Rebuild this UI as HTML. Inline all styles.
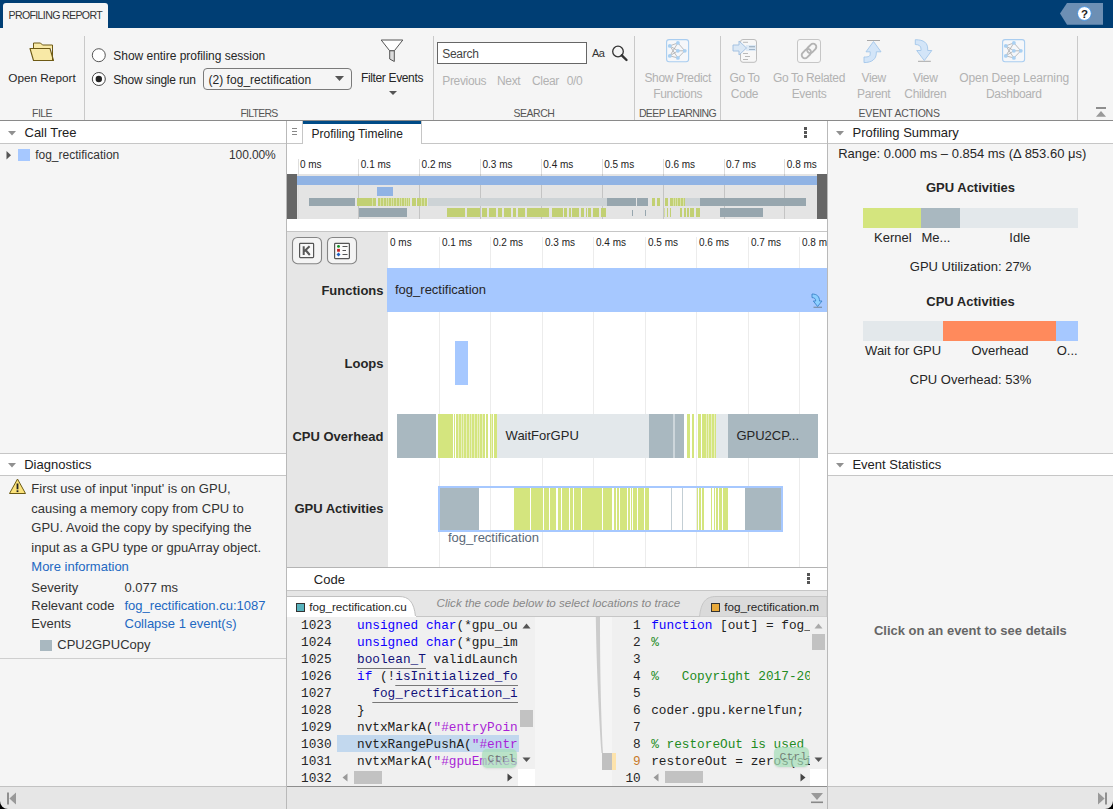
<!DOCTYPE html>
<html><head><meta charset="utf-8">
<style>
*{box-sizing:border-box;margin:0;padding:0}
html,body{width:1113px;height:809px;overflow:hidden;background:#f5f5f5;font-family:"Liberation Sans",sans-serif;color:#212121;position:relative}
.a{position:absolute}
.t{position:absolute;white-space:nowrap;line-height:1}
svg{position:absolute;overflow:visible}
</style></head><body>

<div class="a" style="left:0px;top:0px;width:1113px;height:28px;background:#003e74;"></div>
<div class="a" style="left:3px;top:3px;width:105px;height:25px;background:#f5f5f5;border-radius:3px 3px 0 0"></div>
<div class="t" style="top:9.92px;font-size:10.6px;color:#333;font-family:'Liberation Sans',sans-serif;left:8.5px;letter-spacing:-0.65px;">PROFILING REPORT</div>
<svg style="left:1059px;top:3px" width="45" height="22"><polygon points="1,10.6 8,0 44,0 44,21.8 8,21.8" fill="#6d8fb4"/><circle cx="25.4" cy="10.5" r="6.9" fill="#fff" stroke="#3b8de0" stroke-width="0.9"/><text x="25.4" y="14.6" font-size="11.5" font-weight="bold" text-anchor="middle" fill="#222" font-family="Liberation Sans">?</text></svg>
<div class="a" style="left:0px;top:120px;width:1113px;height:1px;background:#8a8a8a;"></div>
<div class="a" style="left:84px;top:36px;width:1px;height:84px;background:#c9c9c9;"></div>
<div class="a" style="left:433px;top:36px;width:1px;height:84px;background:#c9c9c9;"></div>
<div class="a" style="left:634px;top:36px;width:1px;height:84px;background:#c9c9c9;"></div>
<div class="a" style="left:720px;top:36px;width:1px;height:84px;background:#c9c9c9;"></div>
<div class="a" style="left:1077px;top:36px;width:1px;height:84px;background:#c9c9c9;"></div>
<svg style="left:29px;top:41px" width="27" height="21"><path d="M4.5,7.5 V2 h7 l2,2 h10 v3.5" fill="#f8e9a6" stroke="#6e5a14" stroke-width="1"/><path d="M1,7.5 h20 l3.5,12 h-20 z" fill="#f8e9a6" stroke="#6e5a14" stroke-width="1.1" stroke-linejoin="round"/><path d="M23.5,4 v15.5" stroke="#6e5a14" stroke-width="1"/></svg>
<div class="t" style="top:72.51px;font-size:11.8px;color:#262626;font-family:'Liberation Sans',sans-serif;left:-258px;width:600px;text-align:center;">Open Report</div>
<div class="t" style="top:107.81px;font-size:10.5px;color:#555;font-family:'Liberation Sans',sans-serif;left:-258px;width:600px;text-align:center;letter-spacing:-0.6px;">FILE</div>
<svg style="left:90px;top:47px" width="18" height="40"><circle cx="8.8" cy="8.2" r="6.5" fill="#fff" stroke="#555" stroke-width="1"/><circle cx="8.8" cy="32" r="6.5" fill="#fff" stroke="#444" stroke-width="1"/><circle cx="8.8" cy="32" r="3.2" fill="#222"/></svg>
<div class="t" style="top:49.84px;font-size:12px;color:#262626;font-family:'Liberation Sans',sans-serif;left:113.3px;letter-spacing:-0.03px;">Show entire profiling session</div>
<div class="t" style="top:73.84px;font-size:12px;color:#262626;font-family:'Liberation Sans',sans-serif;left:113.3px;letter-spacing:-0.2px;">Show single run</div>
<div class="a" style="left:203px;top:68px;width:149px;height:22px;background:#f5f5f5;border:1px solid #7a7a7a;border-radius:4px"></div>
<div class="t" style="top:73.84px;font-size:12px;color:#262626;font-family:'Liberation Sans',sans-serif;left:208.5px;letter-spacing:0.03px;">(2) fog_rectification</div>
<svg style="left:335px;top:76px" width="10" height="6"><polygon points="0,0 9,0 4.5,5" fill="#555"/></svg>
<svg style="left:380px;top:39px" width="25" height="26"><path d="M1.2,1 H22.8 L14.3,11.8 H9.7 Z" fill="#fff" stroke="#555" stroke-width="1" stroke-linejoin="round"/><path d="M9.7,11.8 H14.3 V22.5 L9.7,20 Z" fill="#dcdcdc" stroke="#555" stroke-width="1" stroke-linejoin="round"/></svg>
<div class="t" style="top:71.84px;font-size:12px;color:#262626;font-family:'Liberation Sans',sans-serif;left:92px;width:600px;text-align:center;letter-spacing:-0.35px;">Filter Events</div>
<svg style="left:389px;top:91px" width="9" height="6"><polygon points="0,0 8,0 4,4" fill="#555"/></svg>
<div class="t" style="top:107.81px;font-size:10.5px;color:#555;font-family:'Liberation Sans',sans-serif;left:-41px;width:600px;text-align:center;letter-spacing:-0.75px;">FILTERS</div>
<div class="a" style="left:437px;top:42px;width:150px;height:22px;background:#fff;border:1px solid #666"></div>
<div class="t" style="top:47.84px;font-size:12px;color:#444;font-family:'Liberation Sans',sans-serif;left:442.3px;letter-spacing:-0.3px;">Search</div>
<div class="t" style="top:48.19px;font-size:11px;color:#333;font-family:'Liberation Sans',sans-serif;left:592px;letter-spacing:-0.6px;">Aa</div>
<svg style="left:611px;top:45px" width="18" height="17"><circle cx="7" cy="6.5" r="5.3" fill="none" stroke="#333" stroke-width="1.3"/><path d="M10.8,10.3 L15.5,15" stroke="#333" stroke-width="2.4" stroke-linecap="round"/></svg>
<div class="t" style="top:74.84px;font-size:12px;color:#b2b2b2;font-family:'Liberation Sans',sans-serif;left:442.3px;letter-spacing:-0.35px;">Previous</div>
<div class="t" style="top:74.84px;font-size:12px;color:#b2b2b2;font-family:'Liberation Sans',sans-serif;left:497px;letter-spacing:-0.35px;">Next</div>
<div class="t" style="top:74.84px;font-size:12px;color:#b2b2b2;font-family:'Liberation Sans',sans-serif;left:532px;letter-spacing:-0.35px;">Clear</div>
<div class="t" style="top:74.84px;font-size:12px;color:#b2b2b2;font-family:'Liberation Sans',sans-serif;left:566.8px;letter-spacing:-0.35px;">0/0</div>
<div class="t" style="top:107.81px;font-size:10.5px;color:#555;font-family:'Liberation Sans',sans-serif;left:234px;width:600px;text-align:center;letter-spacing:-0.5px;">SEARCH</div>
<svg style="left:666px;top:39px" width="24" height="24"><rect x="0.6" y="0.6" width="22" height="22.2" rx="2.5" fill="#f5f7fa" stroke="#a9cdf0" stroke-width="1.1"/><path d="M3.8,6.9 L11.9,3.9 M3.8,6.9 L11.9,11.8 M3.8,6.9 L11.9,18.9 M3.8,16.9 L11.9,3.9 M3.8,16.9 L11.9,11.8 M3.8,16.9 L11.9,18.9 M11.9,3.9 L18.8,11.8 M11.9,11.8 L18.8,11.8 M11.9,18.9 L18.8,11.8 " stroke="#a0a0a0" stroke-width="0.7" fill="none"/><g fill="#a9d0f2"><circle cx="3.8" cy="6.9" r="1.9"/><circle cx="3.8" cy="16.9" r="1.9"/><circle cx="11.9" cy="3.9" r="1.9"/><circle cx="11.9" cy="11.8" r="1.9"/><circle cx="11.9" cy="18.9" r="1.9"/><circle cx="18.8" cy="11.8" r="1.9"/></g></svg>
<div class="t" style="top:71.84px;font-size:12px;color:#b2b2b2;font-family:'Liberation Sans',sans-serif;left:377.70000000000005px;width:600px;text-align:center;letter-spacing:-0.35px;">Show Predict</div>
<div class="t" style="top:87.84px;font-size:12px;color:#b2b2b2;font-family:'Liberation Sans',sans-serif;left:377.70000000000005px;width:600px;text-align:center;letter-spacing:-0.35px;">Functions</div>
<div class="t" style="top:107.81px;font-size:10.5px;color:#555;font-family:'Liberation Sans',sans-serif;left:377.5px;width:600px;text-align:center;letter-spacing:-0.6px;">DEEP LEARNING</div>
<svg style="left:732px;top:39px" width="26" height="25"><rect x="8.5" y="0.5" width="16" height="22.8" rx="2.5" fill="#f7f7f7" stroke="#bdbdbd"/><rect x="14" y="6" width="10" height="6" fill="#dde9f5"/><path d="M11,3.3 h5 M17,7.7 h6 M17,10.5 h6 M11,14.5 h5 M13,17.5 h5 M11,20.5 h5" stroke="#b9b9b9" stroke-width="1"/><path d="M17,7.7 h6 M17,10.5 h6" stroke="#9fb4c8" stroke-width="1"/><path d="M1,6 H7 V2 L14.5,9 L7,16 V12 H1 Z" fill="#dbe8f5" stroke="#9dbde0" stroke-width="0.9" stroke-linejoin="round"/></svg>
<div class="t" style="top:71.84px;font-size:12px;color:#b2b2b2;font-family:'Liberation Sans',sans-serif;left:444.5px;width:600px;text-align:center;letter-spacing:-0.35px;">Go To</div>
<div class="t" style="top:87.84px;font-size:12px;color:#b2b2b2;font-family:'Liberation Sans',sans-serif;left:444.5px;width:600px;text-align:center;letter-spacing:-0.35px;">Code</div>
<svg style="left:797px;top:39px" width="25" height="25"><rect x="0.5" y="0.5" width="23" height="23" rx="2.5" fill="#f7f7f7" stroke="#c6c6c6"/><g fill="none" stroke="#b4b4b4" stroke-width="1.9" transform="rotate(-45 12 12)"><rect x="3" y="8.8" width="10.5" height="6.4" rx="3.2"/><rect x="10.5" y="8.8" width="10.5" height="6.4" rx="3.2"/></g></svg>
<div class="t" style="top:71.84px;font-size:12px;color:#b2b2b2;font-family:'Liberation Sans',sans-serif;left:509px;width:600px;text-align:center;letter-spacing:-0.35px;">Go To Related</div>
<div class="t" style="top:87.84px;font-size:12px;color:#b2b2b2;font-family:'Liberation Sans',sans-serif;left:509px;width:600px;text-align:center;letter-spacing:-0.35px;">Events</div>
<svg style="left:863px;top:39px" width="20" height="26"><path d="M4,1.5 H17" stroke="#a8a8a8" stroke-width="1"/><path d="M10.5,2.5 L18,12.8 H13.3 V14 C13.3,20 9,23.6 1,23.6 V18 C5.5,18 7.2,17.5 7.2,15 V12.8 H3 Z" fill="#d3e5f8" stroke="#a3c6ea" stroke-width="0.9" stroke-linejoin="round"/></svg>
<div class="t" style="top:71.84px;font-size:12px;color:#b2b2b2;font-family:'Liberation Sans',sans-serif;left:573.7px;width:600px;text-align:center;letter-spacing:-0.35px;">View</div>
<div class="t" style="top:87.84px;font-size:12px;color:#b2b2b2;font-family:'Liberation Sans',sans-serif;left:573.7px;width:600px;text-align:center;letter-spacing:-0.35px;">Parent</div>
<svg style="left:914px;top:39px" width="20" height="26"><path d="M4,22.3 H16.8" stroke="#a8a8a8" stroke-width="1"/><path d="M1.3,0.7 V5.5 C5,5.5 7,7 7,10 V11.5 H2.7 L10.3,21.6 L17.8,11.5 H13.7 V10 C13.7,4 10,0.7 1.3,0.7 Z" fill="#d3e5f8" stroke="#a3c6ea" stroke-width="0.9" stroke-linejoin="round"/></svg>
<div class="t" style="top:71.84px;font-size:12px;color:#b2b2b2;font-family:'Liberation Sans',sans-serif;left:625.3px;width:600px;text-align:center;letter-spacing:-0.35px;">View</div>
<div class="t" style="top:87.84px;font-size:12px;color:#b2b2b2;font-family:'Liberation Sans',sans-serif;left:625.3px;width:600px;text-align:center;letter-spacing:-0.35px;">Children</div>
<svg style="left:1002px;top:39px" width="24" height="24"><rect x="0.6" y="0.6" width="22" height="22.2" rx="2.5" fill="#f5f7fa" stroke="#a9cdf0" stroke-width="1.1"/><path d="M3.8,6.9 L11.9,3.9 M3.8,6.9 L11.9,11.8 M3.8,6.9 L11.9,18.9 M3.8,16.9 L11.9,3.9 M3.8,16.9 L11.9,11.8 M3.8,16.9 L11.9,18.9 M11.9,3.9 L18.8,11.8 M11.9,11.8 L18.8,11.8 M11.9,18.9 L18.8,11.8 " stroke="#a0a0a0" stroke-width="0.7" fill="none"/><g fill="#a9d0f2"><circle cx="3.8" cy="6.9" r="1.9"/><circle cx="3.8" cy="16.9" r="1.9"/><circle cx="11.9" cy="3.9" r="1.9"/><circle cx="11.9" cy="11.8" r="1.9"/><circle cx="11.9" cy="18.9" r="1.9"/><circle cx="18.8" cy="11.8" r="1.9"/></g></svg>
<div class="t" style="top:71.84px;font-size:12px;color:#b2b2b2;font-family:'Liberation Sans',sans-serif;left:714.2px;width:600px;text-align:center;letter-spacing:-0.09px;">Open Deep Learning</div>
<div class="t" style="top:87.84px;font-size:12px;color:#b2b2b2;font-family:'Liberation Sans',sans-serif;left:713.8px;width:600px;text-align:center;letter-spacing:-0.35px;">Dashboard</div>
<div class="t" style="top:107.81px;font-size:10.5px;color:#555;font-family:'Liberation Sans',sans-serif;left:599.2px;width:600px;text-align:center;letter-spacing:-0.2px;">EVENT ACTIONS</div>
<svg style="left:1095px;top:106px" width="13" height="12"><rect x="1" y="1" width="10" height="2" fill="#8e8e8e"/><polygon points="6,5 11,10.8 1,10.8" fill="#999"/></svg>
<div class="a" style="left:0px;top:121px;width:286px;height:22px;background:#fff;"></div>
<div class="a" style="left:0px;top:143px;width:286px;height:1px;background:#c6c6c6;"></div>
<svg style="left:8px;top:131px" width="9" height="5"><polygon points="0,0 8,0 4,4.5" fill="#909090"/></svg>
<div class="t" style="top:125.89px;font-size:13px;color:#212121;font-family:'Liberation Sans',sans-serif;left:24.5px;">Call Tree</div>
<svg style="left:6px;top:151px" width="6" height="9"><polygon points="0.5,0 5,4.2 0.5,8.5" fill="#555"/></svg>
<div class="a" style="left:18px;top:149px;width:12px;height:12px;background:#a6c8ff;"></div>
<div class="t" style="top:149.04px;font-size:12px;color:#333;font-family:'Liberation Sans',sans-serif;left:35.2px;">fog_rectification</div>
<div class="t" style="top:149.04px;font-size:12px;color:#333;font-family:'Liberation Sans',sans-serif;right:837.3px;letter-spacing:-0.1px;">100.00%</div>
<div class="a" style="left:0px;top:453px;width:286px;height:1px;background:#c6c6c6;"></div>
<div class="a" style="left:0px;top:454px;width:286px;height:21px;background:#fff;"></div>
<div class="a" style="left:0px;top:475px;width:286px;height:1px;background:#c6c6c6;"></div>
<svg style="left:8px;top:463px" width="9" height="5"><polygon points="0,0 8,0 4,4.5" fill="#909090"/></svg>
<div class="t" style="top:457.99px;font-size:13px;color:#212121;font-family:'Liberation Sans',sans-serif;left:24.2px;">Diagnostics</div>
<svg style="left:9px;top:478px" width="18" height="17"><polygon points="8.5,1 16.5,15.5 0.5,15.5" fill="#fbe27a" stroke="#6b5a14" stroke-width="1" stroke-linejoin="round"/><rect x="7.6" y="5.5" width="1.8" height="5.8" fill="#222"/><rect x="7.6" y="12.3" width="1.8" height="1.8" fill="#222"/></svg>
<div class="t" style="top:482.19px;font-size:13px;color:#333;font-family:'Liberation Sans',sans-serif;left:31.3px;">First use of input &#x27;input&#x27; is on GPU,</div>
<div class="t" style="top:501.69px;font-size:13px;color:#333;font-family:'Liberation Sans',sans-serif;left:31.3px;">causing a memory copy from CPU to</div>
<div class="t" style="top:521.19px;font-size:13px;color:#333;font-family:'Liberation Sans',sans-serif;left:31.3px;">GPU. Avoid the copy by specifying the</div>
<div class="t" style="top:540.69px;font-size:13px;color:#333;font-family:'Liberation Sans',sans-serif;left:31.3px;">input as a GPU type or gpuArray object.</div>
<div class="t" style="top:559.99px;font-size:13px;color:#2268c2;font-family:'Liberation Sans',sans-serif;left:31.3px;">More information</div>
<div class="t" style="top:580.89px;font-size:13px;color:#333;font-family:'Liberation Sans',sans-serif;left:31.3px;">Severity</div>
<div class="t" style="top:580.89px;font-size:13px;color:#333;font-family:'Liberation Sans',sans-serif;left:124.5px;">0.077 ms</div>
<div class="t" style="top:599.19px;font-size:13px;color:#333;font-family:'Liberation Sans',sans-serif;left:31.3px;">Relevant code</div>
<div class="t" style="top:599.19px;font-size:13px;color:#2268c2;font-family:'Liberation Sans',sans-serif;left:124.5px;">fog_rectification.cu:1087</div>
<div class="t" style="top:616.89px;font-size:13px;color:#333;font-family:'Liberation Sans',sans-serif;left:31.3px;">Events</div>
<div class="t" style="top:616.89px;font-size:13px;color:#2268c2;font-family:'Liberation Sans',sans-serif;left:124.5px;">Collapse 1 event(s)</div>
<div class="a" style="left:40px;top:640px;width:12px;height:11px;background:#a9b8c0;"></div>
<div class="t" style="top:638.29px;font-size:13px;color:#333;font-family:'Liberation Sans',sans-serif;left:57.3px;">CPU2GPUCopy</div>
<div class="a" style="left:0px;top:658px;width:286px;height:1px;background:#cfcfcf;"></div>
<div class="a" style="left:286px;top:121px;width:1px;height:688px;background:#b9b9b9;"></div>
<div class="a" style="left:827px;top:121px;width:1px;height:688px;background:#b9b9b9;"></div>
<div class="a" style="left:828px;top:121px;width:285px;height:22px;background:#fff;"></div>
<div class="a" style="left:828px;top:143px;width:285px;height:1px;background:#c6c6c6;"></div>
<svg style="left:836px;top:131px" width="9" height="5"><polygon points="0,0 8,0 4,4.5" fill="#909090"/></svg>
<div class="t" style="top:125.89px;font-size:13px;color:#212121;font-family:'Liberation Sans',sans-serif;left:852.6px;">Profiling Summary</div>
<div class="t" style="top:146.89px;font-size:13px;color:#262626;font-family:'Liberation Sans',sans-serif;left:838.2px;">Range: 0.000 ms – 0.854 ms (Δ 853.60 μs)</div>
<div class="t" style="top:181.49px;font-size:13px;color:#262626;font-family:'Liberation Sans',sans-serif;font-weight:bold;left:670.5px;width:600px;text-align:center;">GPU Activities</div>
<div class="a" style="left:863px;top:208px;width:58px;height:20px;background:#d4e57e;"></div>
<div class="a" style="left:921px;top:208px;width:39px;height:20px;background:#a9b8c0;"></div>
<div class="a" style="left:960px;top:208px;width:118px;height:20px;background:#e3e8eb;"></div>
<div class="t" style="top:231.39px;font-size:13px;color:#262626;font-family:'Liberation Sans',sans-serif;left:874.1px;">Kernel</div>
<div class="t" style="top:231.39px;font-size:13px;color:#262626;font-family:'Liberation Sans',sans-serif;left:921.5px;">Me...</div>
<div class="t" style="top:231.39px;font-size:13px;color:#262626;font-family:'Liberation Sans',sans-serif;left:1009.3px;">Idle</div>
<div class="t" style="top:259.59px;font-size:13px;color:#262626;font-family:'Liberation Sans',sans-serif;left:670.5px;width:600px;text-align:center;">GPU Utilization: 27%</div>
<div class="t" style="top:294.59px;font-size:13px;color:#262626;font-family:'Liberation Sans',sans-serif;font-weight:bold;left:670.5px;width:600px;text-align:center;">CPU Activities</div>
<div class="a" style="left:863px;top:321px;width:80px;height:20px;background:#e3e8eb;"></div>
<div class="a" style="left:943px;top:321px;width:113px;height:20px;background:#ff8a5c;"></div>
<div class="a" style="left:1056px;top:321px;width:22px;height:20px;background:#a6c8ff;"></div>
<div class="t" style="top:344.49px;font-size:13px;color:#262626;font-family:'Liberation Sans',sans-serif;left:865.1px;">Wait for GPU</div>
<div class="t" style="top:344.49px;font-size:13px;color:#262626;font-family:'Liberation Sans',sans-serif;left:971.4px;">Overhead</div>
<div class="t" style="top:344.49px;font-size:13px;color:#262626;font-family:'Liberation Sans',sans-serif;left:1056.7px;">O...</div>
<div class="t" style="top:372.69px;font-size:13px;color:#262626;font-family:'Liberation Sans',sans-serif;left:670.5px;width:600px;text-align:center;">CPU Overhead: 53%</div>
<div class="a" style="left:828px;top:453px;width:285px;height:1px;background:#c6c6c6;"></div>
<div class="a" style="left:828px;top:454px;width:285px;height:21px;background:#fff;"></div>
<div class="a" style="left:828px;top:475px;width:285px;height:1px;background:#c6c6c6;"></div>
<svg style="left:836px;top:463px" width="9" height="5"><polygon points="0,0 8,0 4,4.5" fill="#909090"/></svg>
<div class="t" style="top:457.99px;font-size:13px;color:#212121;font-family:'Liberation Sans',sans-serif;left:852.4px;">Event Statistics</div>
<div class="t" style="top:623.79px;font-size:13px;color:#666;font-family:'Liberation Sans',sans-serif;font-weight:bold;left:670.4px;width:600px;text-align:center;">Click on an event to see details</div>
<div class="a" style="left:0px;top:786px;width:286px;height:1px;background:#c2c2c2;"></div>
<div class="a" style="left:828px;top:786px;width:285px;height:1px;background:#c2c2c2;"></div>
<div class="a" style="left:0px;top:787px;width:1113px;height:22px;background:#e6e6e6;"></div>
<div class="a" style="left:286px;top:786px;width:1px;height:23px;background:#b9b9b9;"></div>
<div class="a" style="left:827px;top:786px;width:1px;height:23px;background:#b9b9b9;"></div>
<svg style="left:6px;top:791.5px" width="12" height="14"><rect x="1" y="0.5" width="2" height="12" fill="#8f8f8f"/><polygon points="10,0.5 10,12.5 3.4,6.5" fill="#999"/></svg>
<svg style="left:1096px;top:791.5px" width="12" height="14"><rect x="9" y="0.5" width="2" height="12" fill="#8f8f8f"/><polygon points="2,0.5 2,12.5 8.6,6.5" fill="#999"/></svg>
<div class="a" style="left:287px;top:121px;width:540px;height:665px;background:#fff;"></div>
<div class="a" style="left:287px;top:143px;width:540px;height:1px;background:#c6c6c6;"></div>
<div class="a" style="left:302px;top:121px;width:1px;height:23px;background:#c6c6c6;"></div>
<svg style="left:292px;top:128px" width="6" height="8"><path d="M0,0.5 H5 M0,3.5 H5 M0,6.5 H5" stroke="#888" stroke-width="1"/></svg>
<div class="a" style="left:303px;top:121px;width:118px;height:23px;background:#fff;"></div>
<div class="a" style="left:303px;top:121px;width:118px;height:3px;background:#004b87;"></div>
<div class="a" style="left:421px;top:121px;width:1px;height:23px;background:#c6c6c6;"></div>
<div class="t" style="top:128.34px;font-size:12px;color:#212121;font-family:'Liberation Sans',sans-serif;left:311.5px;">Profiling Timeline</div>
<svg style="left:804px;top:127px" width="4" height="11"><rect x="0" y="0" width="3" height="3" fill="#555"/><rect x="0" y="4" width="3" height="3" fill="#555"/><rect x="0" y="8" width="3" height="3" fill="#555"/></svg>
<div class="a" style="left:297px;top:174px;width:520px;height:45px;background:#e4e4e4;"></div>
<div class="a" style="left:298px;top:159px;width:1px;height:60px;background:#dedede;"></div>
<div class="t" style="top:159.53px;font-size:10px;color:#222;font-family:'Liberation Sans',sans-serif;left:299.90000000000003px;">0 ms</div>
<div class="a" style="left:358px;top:159px;width:1px;height:60px;background:#dedede;"></div>
<div class="t" style="top:159.53px;font-size:10px;color:#222;font-family:'Liberation Sans',sans-serif;left:360.8px;">0.1 ms</div>
<div class="a" style="left:419px;top:159px;width:1px;height:60px;background:#dedede;"></div>
<div class="t" style="top:159.53px;font-size:10px;color:#222;font-family:'Liberation Sans',sans-serif;left:421.6px;">0.2 ms</div>
<div class="a" style="left:480px;top:159px;width:1px;height:60px;background:#dedede;"></div>
<div class="t" style="top:159.53px;font-size:10px;color:#222;font-family:'Liberation Sans',sans-serif;left:482.5px;">0.3 ms</div>
<div class="a" style="left:541px;top:159px;width:1px;height:60px;background:#dedede;"></div>
<div class="t" style="top:159.53px;font-size:10px;color:#222;font-family:'Liberation Sans',sans-serif;left:543.3px;">0.4 ms</div>
<div class="a" style="left:602px;top:159px;width:1px;height:60px;background:#dedede;"></div>
<div class="t" style="top:159.53px;font-size:10px;color:#222;font-family:'Liberation Sans',sans-serif;left:604.1999999999999px;">0.5 ms</div>
<div class="a" style="left:663px;top:159px;width:1px;height:60px;background:#dedede;"></div>
<div class="t" style="top:159.53px;font-size:10px;color:#222;font-family:'Liberation Sans',sans-serif;left:665.0999999999999px;">0.6 ms</div>
<div class="a" style="left:724px;top:159px;width:1px;height:60px;background:#dedede;"></div>
<div class="t" style="top:159.53px;font-size:10px;color:#222;font-family:'Liberation Sans',sans-serif;left:725.9px;">0.7 ms</div>
<div class="a" style="left:784px;top:159px;width:1px;height:60px;background:#dedede;"></div>
<div class="t" style="top:159.53px;font-size:10px;color:#222;font-family:'Liberation Sans',sans-serif;left:786.8px;">0.8 ms</div>
<div class="a" style="left:358px;top:174px;width:1px;height:45px;background:#c4c4c4;"></div>
<div class="a" style="left:419px;top:174px;width:1px;height:45px;background:#c4c4c4;"></div>
<div class="a" style="left:480px;top:174px;width:1px;height:45px;background:#c4c4c4;"></div>
<div class="a" style="left:541px;top:174px;width:1px;height:45px;background:#c4c4c4;"></div>
<div class="a" style="left:602px;top:174px;width:1px;height:45px;background:#c4c4c4;"></div>
<div class="a" style="left:663px;top:174px;width:1px;height:45px;background:#c4c4c4;"></div>
<div class="a" style="left:724px;top:174px;width:1px;height:45px;background:#c4c4c4;"></div>
<div class="a" style="left:784px;top:174px;width:1px;height:45px;background:#c4c4c4;"></div>
<div class="a" style="left:287px;top:174px;width:10px;height:45px;background:#666;"></div>
<div class="a" style="left:817px;top:174px;width:10px;height:45px;background:#666;"></div>
<div class="a" style="left:297px;top:176px;width:520px;height:8.5px;background:#90b3e4;"></div>
<div class="a" style="left:377px;top:187px;width:16px;height:8.5px;background:#90b3e4;"></div>
<div class="a" style="left:309px;top:198px;width:46px;height:8px;background:#97a6ae;"></div>
<div class="a" style="left:357px;top:198px;width:19px;height:8px;background:#c2d073;"></div>
<div class="a" style="left:377.5px;top:198px;width:32.5px;height:8px;background:#c2d073;"></div>
<div class="a" style="left:412px;top:198px;width:3.5px;height:8px;background:#c2d073;"></div>
<div class="a" style="left:417px;top:198px;width:10px;height:8px;background:#c2d073;"></div>
<div class="a" style="left:372px;top:198px;width:0.8px;height:8px;background:#d7e1a6;"></div>
<div class="a" style="left:380px;top:198px;width:0.8px;height:8px;background:#d7e1a6;"></div>
<div class="a" style="left:383px;top:198px;width:0.8px;height:8px;background:#d7e1a6;"></div>
<div class="a" style="left:385.5px;top:198px;width:0.8px;height:8px;background:#d7e1a6;"></div>
<div class="a" style="left:388px;top:198px;width:0.8px;height:8px;background:#d7e1a6;"></div>
<div class="a" style="left:390.5px;top:198px;width:0.8px;height:8px;background:#d7e1a6;"></div>
<div class="a" style="left:393px;top:198px;width:0.8px;height:8px;background:#d7e1a6;"></div>
<div class="a" style="left:396px;top:198px;width:0.8px;height:8px;background:#d7e1a6;"></div>
<div class="a" style="left:398.5px;top:198px;width:0.8px;height:8px;background:#d7e1a6;"></div>
<div class="a" style="left:401px;top:198px;width:0.8px;height:8px;background:#d7e1a6;"></div>
<div class="a" style="left:403.5px;top:198px;width:0.8px;height:8px;background:#d7e1a6;"></div>
<div class="a" style="left:406px;top:198px;width:0.8px;height:8px;background:#d7e1a6;"></div>
<div class="a" style="left:408px;top:198px;width:0.8px;height:8px;background:#d7e1a6;"></div>
<div class="a" style="left:420.5px;top:198px;width:0.8px;height:8px;background:#d7e1a6;"></div>
<div class="a" style="left:423.5px;top:198px;width:0.8px;height:8px;background:#d7e1a6;"></div>
<div class="a" style="left:427.5px;top:198px;width:179.2px;height:8px;background:#cdd3d6;"></div>
<div class="a" style="left:685.4px;top:198px;width:14.3px;height:8px;background:#cdd3d6;"></div>
<div class="a" style="left:606.7px;top:198px;width:28.9px;height:8px;background:#97a6ae;"></div>
<div class="a" style="left:637px;top:198px;width:11px;height:8px;background:#97a6ae;"></div>
<div class="a" style="left:699.7px;top:198px;width:106.8px;height:8px;background:#97a6ae;"></div>
<div class="a" style="left:652px;top:198px;width:3px;height:8px;background:#c2d073;"></div>
<div class="a" style="left:657.1px;top:198px;width:2.9px;height:8px;background:#c2d073;"></div>
<div class="a" style="left:665px;top:198px;width:3px;height:8px;background:#c2d073;"></div>
<div class="a" style="left:670px;top:198px;width:15.4px;height:8px;background:#c2d073;"></div>
<div class="a" style="left:673px;top:198px;width:0.8px;height:8px;background:#d7e1a6;"></div>
<div class="a" style="left:675.3px;top:198px;width:0.8px;height:8px;background:#d7e1a6;"></div>
<div class="a" style="left:677.2px;top:198px;width:0.8px;height:8px;background:#d7e1a6;"></div>
<div class="a" style="left:679.6px;top:198px;width:0.8px;height:8px;background:#d7e1a6;"></div>
<div class="a" style="left:682.5px;top:198px;width:0.8px;height:8px;background:#d7e1a6;"></div>
<div class="a" style="left:358.6px;top:208px;width:48.2px;height:9px;background:#97a6ae;"></div>
<div class="a" style="left:720px;top:208px;width:43px;height:9px;background:#97a6ae;"></div>
<div class="a" style="left:447.2px;top:208px;width:18.0px;height:9px;background:#c2d073;"></div>
<div class="a" style="left:466.9px;top:208px;width:13.4px;height:9px;background:#c2d073;"></div>
<div class="a" style="left:482.4px;top:208px;width:4.7px;height:9px;background:#c2d073;"></div>
<div class="a" style="left:489px;top:208px;width:7.2px;height:9px;background:#c2d073;"></div>
<div class="a" style="left:498.3px;top:208px;width:3.7px;height:9px;background:#c2d073;"></div>
<div class="a" style="left:504px;top:208px;width:7px;height:9px;background:#c2d073;"></div>
<div class="a" style="left:512.7px;top:208px;width:3.3px;height:9px;background:#c2d073;"></div>
<div class="a" style="left:518px;top:208px;width:6.7px;height:9px;background:#c2d073;"></div>
<div class="a" style="left:527.2px;top:208px;width:22.3px;height:9px;background:#c2d073;"></div>
<div class="a" style="left:551.6px;top:208px;width:11.2px;height:9px;background:#c2d073;"></div>
<div class="a" style="left:564.4px;top:208px;width:2.6px;height:9px;background:#c2d073;"></div>
<div class="a" style="left:568.5px;top:208px;width:2.1px;height:9px;background:#c2d073;"></div>
<div class="a" style="left:572.3px;top:208px;width:7.2px;height:9px;background:#c2d073;"></div>
<div class="a" style="left:581.4px;top:208px;width:2.2px;height:9px;background:#c2d073;"></div>
<div class="a" style="left:585.7px;top:208px;width:1.4px;height:9px;background:#c2d073;"></div>
<div class="a" style="left:588.4px;top:208px;width:2.5px;height:9px;background:#c2d073;"></div>
<div class="a" style="left:593px;top:208px;width:6px;height:9px;background:#c2d073;"></div>
<div class="a" style="left:601.2px;top:208px;width:5.2px;height:9px;background:#c2d073;"></div>
<div class="a" style="left:666.5px;top:208px;width:1.5px;height:9px;background:#c2d073;"></div>
<div class="a" style="left:670px;top:208px;width:1.2px;height:9px;background:#c2d073;"></div>
<div class="a" style="left:680.3px;top:208px;width:2.0px;height:9px;background:#c2d073;"></div>
<div class="a" style="left:684px;top:208px;width:2.3px;height:9px;background:#c2d073;"></div>
<div class="a" style="left:687px;top:208px;width:2.3px;height:9px;background:#c2d073;"></div>
<div class="a" style="left:690.3px;top:208px;width:4.1px;height:9px;background:#c2d073;"></div>
<div class="a" style="left:696px;top:208px;width:4px;height:9px;background:#c2d073;"></div>
<div class="a" style="left:663.6px;top:208px;width:1.3px;height:9px;background:#d3dca0;"></div>
<div class="a" style="left:631.5px;top:210px;width:1px;height:6px;background:#97a6ae;"></div>
<div class="a" style="left:645px;top:210px;width:1px;height:6px;background:#97a6ae;"></div>
<div class="a" style="left:287px;top:231px;width:540px;height:1px;background:#c6c6c6;"></div>
<div class="a" style="left:287px;top:232px;width:101px;height:335px;background:#e6e6e6;"></div>
<div class="a" style="left:287px;top:232px;width:540px;height:20px;overflow:hidden">
<div class="t" style="top:5.53px;font-size:10px;color:#222;font-family:'Liberation Sans',sans-serif;left:103px;">0 ms</div>
</div>
<div class="a" style="left:439px;top:237px;width:1px;height:330px;background:#ececec;"></div>
<div class="a" style="left:287px;top:232px;width:540px;height:20px;overflow:hidden">
<div class="t" style="top:5.53px;font-size:10px;color:#222;font-family:'Liberation Sans',sans-serif;left:155px;">0.1 ms</div>
</div>
<div class="a" style="left:490px;top:237px;width:1px;height:330px;background:#ececec;"></div>
<div class="a" style="left:287px;top:232px;width:540px;height:20px;overflow:hidden">
<div class="t" style="top:5.53px;font-size:10px;color:#222;font-family:'Liberation Sans',sans-serif;left:206px;">0.2 ms</div>
</div>
<div class="a" style="left:542px;top:237px;width:1px;height:330px;background:#ececec;"></div>
<div class="a" style="left:287px;top:232px;width:540px;height:20px;overflow:hidden">
<div class="t" style="top:5.53px;font-size:10px;color:#222;font-family:'Liberation Sans',sans-serif;left:258px;">0.3 ms</div>
</div>
<div class="a" style="left:593px;top:237px;width:1px;height:330px;background:#ececec;"></div>
<div class="a" style="left:287px;top:232px;width:540px;height:20px;overflow:hidden">
<div class="t" style="top:5.53px;font-size:10px;color:#222;font-family:'Liberation Sans',sans-serif;left:309px;">0.4 ms</div>
</div>
<div class="a" style="left:645px;top:237px;width:1px;height:330px;background:#ececec;"></div>
<div class="a" style="left:287px;top:232px;width:540px;height:20px;overflow:hidden">
<div class="t" style="top:5.53px;font-size:10px;color:#222;font-family:'Liberation Sans',sans-serif;left:361px;">0.5 ms</div>
</div>
<div class="a" style="left:696px;top:237px;width:1px;height:330px;background:#ececec;"></div>
<div class="a" style="left:287px;top:232px;width:540px;height:20px;overflow:hidden">
<div class="t" style="top:5.53px;font-size:10px;color:#222;font-family:'Liberation Sans',sans-serif;left:412px;">0.6 ms</div>
</div>
<div class="a" style="left:748px;top:237px;width:1px;height:330px;background:#ececec;"></div>
<div class="a" style="left:287px;top:232px;width:540px;height:20px;overflow:hidden">
<div class="t" style="top:5.53px;font-size:10px;color:#222;font-family:'Liberation Sans',sans-serif;left:464px;">0.7 ms</div>
</div>
<div class="a" style="left:799px;top:237px;width:1px;height:330px;background:#ececec;"></div>
<div class="a" style="left:287px;top:232px;width:540px;height:20px;overflow:hidden">
<div class="t" style="top:5.53px;font-size:10px;color:#222;font-family:'Liberation Sans',sans-serif;left:515px;">0.8 ms</div>
</div>
<svg style="left:292px;top:237px" width="31" height="28"><rect x="0.5" y="0.5" width="29" height="26.2" rx="5" fill="#f4f4f4" stroke="#858585" stroke-width="1.1"/><rect x="7.6" y="6.4" width="14" height="14.2" rx="0.8" fill="#f8f8f8" stroke="#555" stroke-width="1.2"/><path d="M11.7,9.2 V18 M12.3,14.3 L17.6,9.2 M13.6,13 L17.8,18" stroke="#585858" stroke-width="2" fill="none"/></svg>
<svg style="left:327px;top:237px" width="31" height="28"><rect x="0.5" y="0.5" width="29" height="26.2" rx="5" fill="#f4f4f4" stroke="#858585" stroke-width="1.1"/><rect x="7.6" y="6.4" width="14.8" height="15.2" rx="0.8" fill="#fafafa" stroke="#555" stroke-width="1.2"/><circle cx="11.5" cy="9.4" r="1.45" fill="#128a22"/><rect x="10.1" y="11.9" width="2.8" height="2.8" fill="#c41e1e"/><polygon points="11.5,15.4 13.5,17.4 11.5,19.4 9.5,17.4" fill="#1f5fc0"/><path d="M15.5,9.5 h5 M15.5,13.5 h3.5 M15.5,17.5 h5" stroke="#555" stroke-width="1.1"/></svg>
<div class="t" style="top:283.99px;font-size:13px;color:#262626;font-family:'Liberation Sans',sans-serif;font-weight:bold;right:729.5px;">Functions</div>
<div class="t" style="top:356.89px;font-size:13px;color:#262626;font-family:'Liberation Sans',sans-serif;font-weight:bold;right:729.5px;">Loops</div>
<div class="t" style="top:429.79px;font-size:13px;color:#262626;font-family:'Liberation Sans',sans-serif;font-weight:bold;right:729.5px;">CPU Overhead</div>
<div class="t" style="top:501.99px;font-size:13px;color:#262626;font-family:'Liberation Sans',sans-serif;font-weight:bold;right:729.5px;">GPU Activities</div>
<div class="a" style="left:387px;top:268px;width:440px;height:44px;background:#a6c8ff;"></div>
<div class="t" style="top:282.59px;font-size:13px;color:#262626;font-family:'Liberation Sans',sans-serif;left:395px;">fog_rectification</div>
<svg style="left:809px;top:293px" width="15" height="16"><path d="M4.5,14.3 H13" stroke="#7d93ab" stroke-width="1.3"/><path d="M3,1 V4.6 C5.5,4.6 6.7,5.8 6.7,8 H4.3 L8.6,13.5 L13,8 H10.5 C10.5,3.5 8,1 3,1 Z" fill="#8ccfff" stroke="#3c82c8" stroke-width="0.9" stroke-linejoin="miter"/></svg>
<div class="a" style="left:455px;top:341px;width:13px;height:44px;background:#a6c8ff;"></div>
<div class="a" style="left:397px;top:414px;width:39px;height:44px;background:#a9b8c0;"></div>
<div class="a" style="left:497.3px;top:414px;width:151.7px;height:44px;background:#e3e8eb;"></div>
<div class="a" style="left:715.7px;top:414px;width:12.3px;height:44px;background:#e3e8eb;"></div>
<div class="a" style="left:438px;top:414px;width:46.5px;height:44px;background:#d4e57e;"></div>
<div class="a" style="left:486px;top:414px;width:2.3px;height:44px;background:#d4e57e;"></div>
<div class="a" style="left:489.5px;top:414px;width:3.5px;height:44px;background:#d4e57e;"></div>
<div class="a" style="left:493.8px;top:414px;width:3.5px;height:44px;background:#d4e57e;"></div>
<div class="a" style="left:452.5px;top:414px;width:0.9px;height:44px;background:#fff;"></div>
<div class="a" style="left:454.5px;top:414px;width:0.9px;height:44px;background:#fff;"></div>
<div class="a" style="left:458px;top:414px;width:0.9px;height:44px;background:#e8f0bd;"></div>
<div class="a" style="left:460.5px;top:414px;width:0.9px;height:44px;background:#e8f0bd;"></div>
<div class="a" style="left:463px;top:414px;width:0.9px;height:44px;background:#e8f0bd;"></div>
<div class="a" style="left:466px;top:414px;width:0.9px;height:44px;background:#e8f0bd;"></div>
<div class="a" style="left:468.5px;top:414px;width:0.9px;height:44px;background:#e8f0bd;"></div>
<div class="a" style="left:471px;top:414px;width:0.9px;height:44px;background:#e8f0bd;"></div>
<div class="a" style="left:474px;top:414px;width:0.9px;height:44px;background:#e8f0bd;"></div>
<div class="a" style="left:476.5px;top:414px;width:0.9px;height:44px;background:#e8f0bd;"></div>
<div class="a" style="left:479px;top:414px;width:0.9px;height:44px;background:#e8f0bd;"></div>
<div class="a" style="left:482px;top:414px;width:0.9px;height:44px;background:#e8f0bd;"></div>
<div class="a" style="left:491px;top:414px;width:0.9px;height:44px;background:#e8f0bd;"></div>
<div class="a" style="left:649px;top:414px;width:35px;height:44px;background:#a9b8c0;"></div>
<div class="a" style="left:728px;top:414px;width:90px;height:44px;background:#a9b8c0;"></div>
<div class="a" style="left:673px;top:414px;width:1.6px;height:44px;background:#cdd6db;"></div>
<div class="a" style="left:687.2px;top:414px;width:2.8px;height:44px;background:#d4e57e;"></div>
<div class="a" style="left:692px;top:414px;width:2.4px;height:44px;background:#d4e57e;"></div>
<div class="a" style="left:698.2px;top:414px;width:2.8px;height:44px;background:#d4e57e;"></div>
<div class="a" style="left:702.4px;top:414px;width:13.4px;height:44px;background:#d4e57e;"></div>
<div class="a" style="left:705.5px;top:414px;width:0.9px;height:44px;background:#e8f0bd;"></div>
<div class="a" style="left:708.3px;top:414px;width:0.9px;height:44px;background:#e8f0bd;"></div>
<div class="a" style="left:710.6px;top:414px;width:0.9px;height:44px;background:#e8f0bd;"></div>
<div class="a" style="left:713.5px;top:414px;width:0.9px;height:44px;background:#e8f0bd;"></div>
<div class="t" style="top:429.19px;font-size:13px;color:#262626;font-family:'Liberation Sans',sans-serif;left:505.6px;">WaitForGPU</div>
<div class="t" style="top:429.19px;font-size:13px;color:#262626;font-family:'Liberation Sans',sans-serif;left:736.4px;">GPU2CP...</div>
<div class="a" style="left:438px;top:486px;width:345px;height:46px;background:transparent;border:2px solid #a6c8ff"></div>
<div class="a" style="left:440px;top:488px;width:39.4px;height:42px;background:#a9b8c0;"></div>
<div class="a" style="left:745px;top:488px;width:36px;height:42px;background:#a9b8c0;"></div>
<div class="a" style="left:514px;top:488px;width:134.8px;height:42px;background:#d4e57e;"></div>
<div class="a" style="left:529.9px;top:488px;width:1.2px;height:42px;background:#fff;"></div>
<div class="a" style="left:543.1px;top:488px;width:1.2px;height:42px;background:#fff;"></div>
<div class="a" style="left:548.6px;top:488px;width:1.2px;height:42px;background:#fff;"></div>
<div class="a" style="left:556.4px;top:488px;width:1.2px;height:42px;background:#fff;"></div>
<div class="a" style="left:561.1px;top:488px;width:1.2px;height:42px;background:#fff;"></div>
<div class="a" style="left:568.7px;top:488px;width:1.2px;height:42px;background:#fff;"></div>
<div class="a" style="left:573px;top:488px;width:1.2px;height:42px;background:#fff;"></div>
<div class="a" style="left:580.5px;top:488px;width:1.2px;height:42px;background:#fff;"></div>
<div class="a" style="left:601.8px;top:488px;width:1.2px;height:42px;background:#fff;"></div>
<div class="a" style="left:612.4px;top:488px;width:1.2px;height:42px;background:#fff;"></div>
<div class="a" style="left:616.2px;top:488px;width:1.2px;height:42px;background:#fff;"></div>
<div class="a" style="left:619.3px;top:488px;width:1.2px;height:42px;background:#fff;"></div>
<div class="a" style="left:626.8px;top:488px;width:1.2px;height:42px;background:#fff;"></div>
<div class="a" style="left:629.8px;top:488px;width:1.2px;height:42px;background:#fff;"></div>
<div class="a" style="left:632.3px;top:488px;width:1.2px;height:42px;background:#fff;"></div>
<div class="a" style="left:636.6px;top:488px;width:1.2px;height:42px;background:#fff;"></div>
<div class="a" style="left:643.5px;top:488px;width:1.2px;height:42px;background:#fff;"></div>
<div class="a" style="left:670.5px;top:488px;width:1.2px;height:42px;background:#c3ced4;"></div>
<div class="a" style="left:682px;top:488px;width:1.2px;height:42px;background:#c3ced4;"></div>
<div class="a" style="left:696.8px;top:488px;width:1.2px;height:42px;background:#d4e57e;"></div>
<div class="a" style="left:699px;top:488px;width:1.5px;height:42px;background:#d4e57e;"></div>
<div class="a" style="left:702px;top:488px;width:1.7px;height:42px;background:#d4e57e;"></div>
<div class="a" style="left:711.2px;top:488px;width:1.3px;height:42px;background:#d4e57e;"></div>
<div class="a" style="left:713.5px;top:488px;width:1.5px;height:42px;background:#d4e57e;"></div>
<div class="a" style="left:716px;top:488px;width:2px;height:42px;background:#d4e57e;"></div>
<div class="a" style="left:719px;top:488px;width:3px;height:42px;background:#d4e57e;"></div>
<div class="a" style="left:723px;top:488px;width:2.5px;height:42px;background:#d4e57e;"></div>
<div class="a" style="left:726px;top:488px;width:2px;height:42px;background:#d4e57e;"></div>
<div class="t" style="top:531.29px;font-size:13px;color:#5a6878;font-family:'Liberation Sans',sans-serif;left:448px;">fog_rectification</div>
<div class="a" style="left:287px;top:567px;width:540px;height:1px;background:#b4b4b4;"></div>
<div class="t" style="top:573.19px;font-size:13px;color:#212121;font-family:'Liberation Sans',sans-serif;left:313.8px;">Code</div>
<svg style="left:807px;top:573px" width="4" height="11"><rect x="0" y="0" width="3" height="3" fill="#555"/><rect x="0" y="4" width="3" height="3" fill="#555"/><rect x="0" y="8" width="3" height="3" fill="#555"/></svg>
<div class="a" style="left:287px;top:590px;width:540px;height:1px;background:#c6c6c6;"></div>
<div class="a" style="left:287px;top:591px;width:540px;height:25px;background:#e6e6e6;"></div>
<div class="a" style="left:287px;top:616px;width:540px;height:1px;background:#c6c6c6;"></div>
<svg style="left:287px;top:596px" width="131" height="21"><path d="M0,21 V0.5 H112 C122,0.5 127,6 128.5,20.5 V21 Z" fill="#fff" stroke="#c0c0c0" stroke-width="1"/><rect x="0" y="20" width="129" height="2" fill="#fff"/><rect x="0" y="1" width="1" height="21" fill="#fff"/></svg>
<div class="a" style="left:296px;top:603px;width:9px;height:9px;background:#58b3bd;border:1px solid #333"></div>
<div class="t" style="top:600.59px;font-size:11.7px;color:#262626;font-family:'Liberation Sans',sans-serif;left:309.2px;">fog_rectification.cu</div>
<div class="t" style="top:597.18px;font-size:11.6px;color:#888;font-family:'Liberation Sans',sans-serif;font-style:italic;left:436.6px;">Click the code below to select locations to trace</div>
<svg style="left:699px;top:596px" width="129" height="21"><path d="M0.5,21 C2,6 7,0.5 17,0.5 H128 V21 Z" fill="#dadada" stroke="#c6c6c6" stroke-width="1"/></svg>
<div class="a" style="left:711px;top:603px;width:9px;height:9px;background:#e8a93a;border:1px solid #333"></div>
<div class="t" style="top:600.59px;font-size:11.7px;color:#262626;font-family:'Liberation Sans',sans-serif;left:724.2px;">fog_rectification.m</div>
<div class="a" style="left:287px;top:617px;width:248px;height:169px;background:#f0f0f0;"></div>
<div class="a" style="left:535px;top:617px;width:77px;height:169px;background:#f5f5f5;"></div>
<div class="a" style="left:612px;top:617px;width:215px;height:169px;background:#f0f0f0;"></div>
<div class="a" style="left:287px;top:786px;width:540px;height:1px;background:#8e8e8e;"></div>
<div class="a" style="left:336.8px;top:735.3px;width:182px;height:16.5px;background:#c2d8ee;"></div>
<div class="a" style="left:287px;top:617px;width:231px;height:152px;overflow:hidden">
<div class="t" style="left:14px;top:3.23px;font-family:'Liberation Mono',monospace;font-size:12.75px;color:#262626">1023</div>
<div class="t" style="left:70px;top:3.23px;font-family:'Liberation Mono',monospace;font-size:12.75px;white-space:pre"><span style="color:#0e00ff;">unsigned</span><span style="color:#212121;"> </span><span style="color:#0e00ff;">char</span><span style="color:#212121;">(*gpu_output</span></div>
<div class="t" style="left:14px;top:20.23px;font-family:'Liberation Mono',monospace;font-size:12.75px;color:#262626">1024</div>
<div class="t" style="left:70px;top:20.23px;font-family:'Liberation Mono',monospace;font-size:12.75px;white-space:pre"><span style="color:#0e00ff;">unsigned</span><span style="color:#212121;"> </span><span style="color:#0e00ff;">char</span><span style="color:#212121;">(*gpu_image</span></div>
<div class="t" style="left:14px;top:37.23px;font-family:'Liberation Mono',monospace;font-size:12.75px;color:#262626">1025</div>
<div class="t" style="left:70px;top:37.23px;font-family:'Liberation Mono',monospace;font-size:12.75px;white-space:pre"><span style="color:#11117a;text-decoration:underline;text-decoration-color:#777;text-underline-offset:4.5px;">boolean_T</span><span style="color:#212121;"> validLaunch</span></div>
<div class="t" style="left:14px;top:54.23px;font-family:'Liberation Mono',monospace;font-size:12.75px;color:#262626">1026</div>
<div class="t" style="left:70px;top:54.23px;font-family:'Liberation Mono',monospace;font-size:12.75px;white-space:pre"><span style="color:#0e00ff;">if</span><span style="color:#212121;"> (!</span><span style="color:#11117a;text-decoration:underline;text-decoration-color:#777;text-underline-offset:4.5px;">isInitialized_fog</span></div>
<div class="t" style="left:14px;top:71.23px;font-family:'Liberation Mono',monospace;font-size:12.75px;color:#262626">1027</div>
<div class="t" style="left:70px;top:71.23px;font-family:'Liberation Mono',monospace;font-size:12.75px;white-space:pre"><span style="color:#212121;">  </span><span style="color:#11117a;text-decoration:underline;text-decoration-color:#777;text-underline-offset:4.5px;">fog_rectification_init</span></div>
<div class="t" style="left:14px;top:88.23px;font-family:'Liberation Mono',monospace;font-size:12.75px;color:#262626">1028</div>
<div class="t" style="left:70px;top:88.23px;font-family:'Liberation Mono',monospace;font-size:12.75px;white-space:pre"><span style="color:#212121;">}</span></div>
<div class="t" style="left:14px;top:105.23px;font-family:'Liberation Mono',monospace;font-size:12.75px;color:#262626">1029</div>
<div class="t" style="left:70px;top:105.23px;font-family:'Liberation Mono',monospace;font-size:12.75px;white-space:pre"><span style="color:#212121;">nvtxMarkA(</span><span style="color:#a91fd6;">&quot;#entryPoint</span></div>
<div class="t" style="left:14px;top:122.23px;font-family:'Liberation Mono',monospace;font-size:12.75px;color:#262626">1030</div>
<div class="t" style="left:70px;top:122.23px;font-family:'Liberation Mono',monospace;font-size:12.75px;white-space:pre"><span style="color:#212121;">nvtxRangePushA(</span><span style="color:#a91fd6;">&quot;#entry</span></div>
<div class="t" style="left:14px;top:139.23px;font-family:'Liberation Mono',monospace;font-size:12.75px;color:#262626">1031</div>
<div class="t" style="left:70px;top:139.23px;font-family:'Liberation Mono',monospace;font-size:12.75px;white-space:pre"><span style="color:#212121;">nvtxMarkA(</span><span style="color:#a91fd6;">&quot;#gpuEmxRes</span></div>
<div class="t" style="left:14px;top:156.23px;font-family:'Liberation Mono',monospace;font-size:12.75px;color:#262626">1032</div>
<div class="t" style="left:70px;top:156.23px;font-family:'Liberation Mono',monospace;font-size:12.75px;white-space:pre"></div>
</div>
<div class="t" style="left:301px;top:773.23px;font-family:'Liberation Mono',monospace;font-size:12.75px;color:#262626">1032</div>
<div class="a" style="left:612px;top:617px;width:198px;height:152px;overflow:hidden">
<div class="t" style="right:169.3px;top:3.23px;font-family:'Liberation Mono',monospace;font-size:12.75px;color:#262626">1</div>
<div class="t" style="left:39.2px;top:3.23px;font-family:'Liberation Mono',monospace;font-size:12.75px;white-space:pre"><span style="color:#0e00ff;">function</span><span style="color:#212121;"> [out] = fog_rectification</span></div>
<div class="t" style="right:169.3px;top:20.23px;font-family:'Liberation Mono',monospace;font-size:12.75px;color:#262626">2</div>
<div class="t" style="left:39.2px;top:20.23px;font-family:'Liberation Mono',monospace;font-size:12.75px;white-space:pre"><span style="color:#228b22;">%</span></div>
<div class="t" style="right:169.3px;top:37.23px;font-family:'Liberation Mono',monospace;font-size:12.75px;color:#262626">3</div>
<div class="t" style="left:39.2px;top:37.23px;font-family:'Liberation Mono',monospace;font-size:12.75px;white-space:pre"></div>
<div class="t" style="right:169.3px;top:54.23px;font-family:'Liberation Mono',monospace;font-size:12.75px;color:#262626">4</div>
<div class="t" style="left:39.2px;top:54.23px;font-family:'Liberation Mono',monospace;font-size:12.75px;white-space:pre"><span style="color:#228b22;">%   Copyright 2017-2019</span></div>
<div class="t" style="right:169.3px;top:71.23px;font-family:'Liberation Mono',monospace;font-size:12.75px;color:#262626">5</div>
<div class="t" style="left:39.2px;top:71.23px;font-family:'Liberation Mono',monospace;font-size:12.75px;white-space:pre"></div>
<div class="t" style="right:169.3px;top:88.23px;font-family:'Liberation Mono',monospace;font-size:12.75px;color:#262626">6</div>
<div class="t" style="left:39.2px;top:88.23px;font-family:'Liberation Mono',monospace;font-size:12.75px;white-space:pre"><span style="color:#212121;">coder.gpu.kernelfun;</span></div>
<div class="t" style="right:169.3px;top:105.23px;font-family:'Liberation Mono',monospace;font-size:12.75px;color:#262626">7</div>
<div class="t" style="left:39.2px;top:105.23px;font-family:'Liberation Mono',monospace;font-size:12.75px;white-space:pre"></div>
<div class="t" style="right:169.3px;top:122.23px;font-family:'Liberation Mono',monospace;font-size:12.75px;color:#262626">8</div>
<div class="t" style="left:39.2px;top:122.23px;font-family:'Liberation Mono',monospace;font-size:12.75px;white-space:pre"><span style="color:#228b22;">% restoreOut is used</span></div>
<div class="t" style="right:169.3px;top:139.23px;font-family:'Liberation Mono',monospace;font-size:12.75px;color:#c87a2a">9</div>
<div class="t" style="left:39.2px;top:139.23px;font-family:'Liberation Mono',monospace;font-size:12.75px;white-space:pre"><span style="color:#212121;">restoreOut = zeros(size</span></div>
<div class="t" style="right:169.3px;top:156.23px;font-family:'Liberation Mono',monospace;font-size:12.75px;color:#262626">10</div>
<div class="t" style="left:39.2px;top:156.23px;font-family:'Liberation Mono',monospace;font-size:12.75px;white-space:pre"></div>
</div>
<div class="t" style="right:472.29999999999995px;top:773.23px;font-family:'Liberation Mono',monospace;font-size:12.75px;color:#262626">10</div>
<svg style="left:522px;top:623px" width="10" height="6"><polygon points="0.5,5.5 8.5,5.5 4.5,0.5" fill="#555"/></svg>
<div class="a" style="left:520px;top:710px;width:12.7px;height:16.5px;background:#c2c2c2;"></div>
<svg style="left:522px;top:757px" width="10" height="6"><polygon points="0.5,0.5 8.5,0.5 4.5,5" fill="#555"/></svg>
<svg style="left:342px;top:773px" width="6" height="10"><polygon points="5.5,0.5 5.5,8.5 0.5,4.5" fill="#999"/></svg>
<div class="a" style="left:354.3px;top:771.3px;width:27.3px;height:12.5px;background:#c2c2c2;"></div>
<svg style="left:507px;top:773px" width="6" height="10"><polygon points="0.5,0.5 0.5,8.5 5.5,4.5" fill="#444"/></svg>
<div class="a" style="left:518px;top:769px;width:17px;height:17px;background:#fff;"></div>
<div class="a" style="left:482px;top:748.5px;width:35px;height:19.5px;border-radius:5px;background:rgba(165,222,185,0.72);box-shadow:0 1px 2px rgba(0,0,0,0.08)"></div>
<div class="t" style="top:752.99px;font-size:11.5px;color:rgba(90,90,90,0.75);font-family:'Liberation Mono',monospace;left:487.5px;">Ctrl</div>
<svg style="left:590px;top:617px" width="30" height="160"><path d="M5.8,0 H10 C10,50 11,100 13,136 H11.5 C9,100 6.5,50 5.8,0 Z" fill="#cccccc"/></svg>
<div class="a" style="left:602px;top:752.6px;width:10px;height:17px;background:#c0c0c0;"></div>
<div class="a" style="left:612.2px;top:752.6px;width:4px;height:17px;background:#fde3ac;"></div>
<svg style="left:814px;top:623px" width="10" height="6"><polygon points="0.5,5.5 8.5,5.5 4.5,0.5" fill="#aaa"/></svg>
<div class="a" style="left:812px;top:634.2px;width:12.7px;height:16.1px;background:#c2c2c2;"></div>
<svg style="left:814px;top:757px" width="10" height="6"><polygon points="0.5,0.5 8.5,0.5 4.5,5" fill="#555"/></svg>
<svg style="left:652.5px;top:773px" width="6" height="10"><polygon points="5.5,0.5 5.5,8.5 0.5,4.5" fill="#999"/></svg>
<div class="a" style="left:664.5px;top:771px;width:38.3px;height:12.3px;background:#c2c2c2;"></div>
<svg style="left:799.5px;top:773px" width="6" height="10"><polygon points="0.5,0.5 0.5,8.5 5.5,4.5" fill="#444"/></svg>
<div class="a" style="left:810px;top:769px;width:17px;height:17px;background:#fff;"></div>
<div class="a" style="left:774px;top:746.6px;width:35px;height:20.6px;border-radius:5px;background:rgba(165,222,185,0.72);box-shadow:0 1px 2px rgba(0,0,0,0.08)"></div>
<div class="t" style="top:750.99px;font-size:11.5px;color:rgba(90,90,90,0.75);font-family:'Liberation Mono',monospace;left:779.5px;">Ctrl</div>
<svg style="left:810px;top:792px" width="14" height="12"><polygon points="1,1 13,1 7,8" fill="#999"/><rect x="1" y="9.5" width="12" height="1.6" fill="#888"/></svg>
<svg style="left:0;top:801px" width="8" height="8"><path d="M0,0 A8,8 0 0 0 8,8 H0 Z" fill="#000"/></svg>
<svg style="left:1105px;top:801px" width="8" height="8"><path d="M8,0 A8,8 0 0 1 0,8 H8 Z" fill="#000"/></svg>
</body></html>
